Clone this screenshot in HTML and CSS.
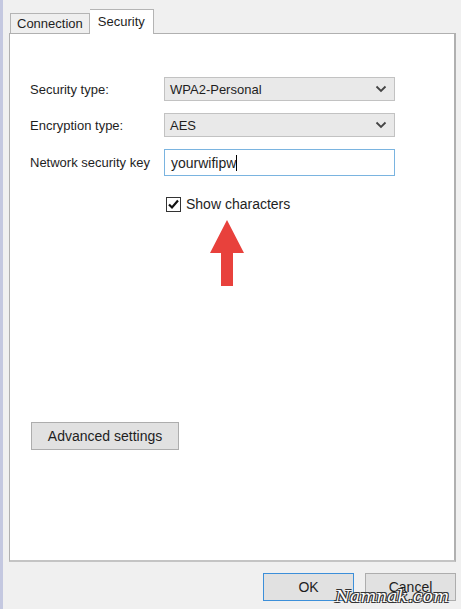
FILE: index.html
```html
<!DOCTYPE html>
<html lang="en">
<head>
    <meta charset="UTF-8">
    <title>Wireless Network Properties</title>
    <link rel="stylesheet" href="styles.css">
</head>
<body>
    <div class="window">
        <div class="tabs">
            <div class="tab">Connection</div>
            <div class="tab active">Security</div>
        </div>
        <div class="panel">
            <div class="row">
                <label>Security type:</label>
                <div class="select">WPA2-Personal
                    <svg width="12" height="8" viewBox="0 0 12 8"><path d="M1.5 1.5 L6 6 L10.5 1.5" fill="none" stroke="#444" stroke-width="1.8"/></svg>
                </div>
            </div>
            <div class="row">
                <label>Encryption type:</label>
                <div class="select">AES
                    <svg width="12" height="8" viewBox="0 0 12 8"><path d="M1.5 1.5 L6 6 L10.5 1.5" fill="none" stroke="#444" stroke-width="1.8"/></svg>
                </div>
            </div>
            <div class="row">
                <label>Network security key</label>
                <div class="input">yourwifipw<span class="caret"></span></div>
            </div>
            <div class="check-row">
                <span class="checkbox">
                    <svg width="13" height="13" viewBox="0 0 13 13"><path d="M2 6.5 L5 9.5 L11 2.5" fill="none" stroke="#111" stroke-width="2.2"/></svg>
                </span>
                Show characters
            </div>
            <div class="arrow">
                <svg width="36" height="66" viewBox="0 0 36 66"><path d="M18 0 L35 33 L24 33 L24 66 L12 66 L12 33 L1 33 Z" fill="#e8413c"/></svg>
            </div>
            <button class="btn advanced">Advanced settings</button>
        </div>
        <div class="footer">
            <button class="btn ok">OK</button>
            <button class="btn">Cancel</button>
            <span class="watermark">Namnak.com</span>
        </div>
    </div>
</body>
</html>
```

FILE: styles.css
```css
body {
    margin: 0;
    background-color: #f0f0f0;
    font-family: 'Liberation Sans', Arial, sans-serif;
    font-size: 13px;
    color: #1e1e1e;
}

.window {
    height: 609px;
    border-left: 3px solid #c4c8e0;
    padding-left: 6px;
    box-sizing: border-box;
    overflow: hidden;
}

.tabs {
    display: flex;
    align-items: flex-end;
    height: 33px;
    padding-left: 1px;
}

.tab {
    height: 19px;
    padding: 0 6px;
    line-height: 20px;
    border: 1px solid #b4b4b4;
    border-bottom: none;
    background-color: #efefef;
}

.tab.active {
    height: 24px;
    line-height: 24px;
    background-color: #fff;
    margin-bottom: -1px;
    position: relative;
    z-index: 1;
    padding: 0 8px;
    border-left: none;
}

.panel {
    height: 529px;
    margin-right: 5px;
    background-color: #fff;
    border: 1px solid #b0b0b0;
    border-right: 2px solid #b0b0b0;
    border-bottom: 2px solid #c4c4c4;
    box-sizing: border-box;
    padding: 43px 59px 0 20px;
    display: flex;
    flex-direction: column;
}

.row {
    display: flex;
    align-items: center;
    margin-bottom: 12px;
}

.row label {
    width: 134px;
    flex-shrink: 0;
}

.select {
    flex: 1;
    height: 24px;
    box-sizing: border-box;
    border: 1px solid #c2c2c2;
    background-color: #e9e9e9;
    display: flex;
    align-items: center;
    justify-content: space-between;
    padding: 0 7px 0 5px;
}

.input {
    flex: 1;
    height: 27px;
    box-sizing: border-box;
    border: 1px solid #7ab4e0;
    background-color: #fff;
    display: flex;
    align-items: center;
    padding: 0 6px;
    font-size: 14px;
}

.caret {
    width: 1px;
    height: 16px;
    background-color: #000;
}

.check-row {
    display: flex;
    align-items: center;
    gap: 5px;
    margin-left: 136px;
    margin-top: 8px;
    font-size: 14px;
}

.checkbox {
    width: 13px;
    height: 13px;
    border: 1px solid #333;
    display: flex;
}

.arrow {
    margin-left: 179px;
    margin-top: 8px;
    height: 66px;
}

.btn {
    font-family: inherit;
    font-size: 13px;
    color: #1e1e1e;
    background-color: #e1e1e1;
    border: 1px solid #adadad;
    height: 28px;
    padding: 0;
}

.advanced {
    margin-top: 136px;
    margin-left: 1px;
    width: 148px;
    font-size: 14px;
}

.footer {
    display: flex;
    justify-content: flex-end;
    gap: 11px;
    padding: 11px 5px 0 0;
    position: relative;
}

.footer .btn {
    width: 91px;
    font-size: 14px;
}

.btn.ok {
    border-color: #3c8fd9;
}

.watermark {
    position: absolute;
    right: 12px;
    top: 24px;
    font-family: 'DejaVu Serif', serif;
    font-style: italic;
    font-size: 17px;
    color: #fff;
    text-shadow: -1px -1px 0 #333, 1px -1px 0 #333, -1px 1px 0 #333, 1px 1px 0 #333;
}
```
